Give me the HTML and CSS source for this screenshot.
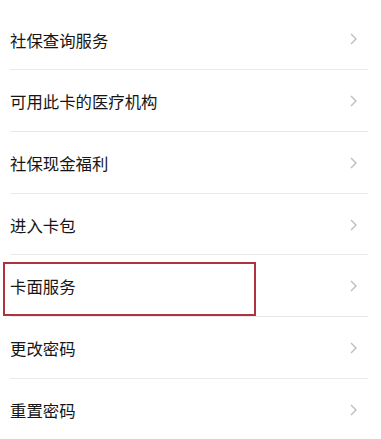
FILE: index.html
```html
<!DOCTYPE html>
<html lang="zh-CN">
<head>
<meta charset="utf-8">
<title>卡片服务</title>
<link rel="stylesheet" href="styles.css">
</head>
<body>
<ul class="menu">
  <li class="item"><span class="label">社保查询服务</span><svg class="chev" viewBox="0 0 7 12"><path d="M1 1 L6 6 L1 11"/></svg></li>
  <li class="item"><span class="label">可用此卡的医疗机构</span><svg class="chev" viewBox="0 0 7 12"><path d="M1 1 L6 6 L1 11"/></svg></li>
  <li class="item"><span class="label">社保现金福利</span><svg class="chev" viewBox="0 0 7 12"><path d="M1 1 L6 6 L1 11"/></svg></li>
  <li class="item"><span class="label">进入卡包</span><svg class="chev" viewBox="0 0 7 12"><path d="M1 1 L6 6 L1 11"/></svg></li>
  <li class="item item-marked"><span class="label">卡面服务</span><svg class="chev" viewBox="0 0 7 12"><path d="M1 1 L6 6 L1 11"/></svg><span class="highlight"></span></li>
  <li class="item"><span class="label">更改密码</span><svg class="chev" viewBox="0 0 7 12"><path d="M1 1 L6 6 L1 11"/></svg></li>
  <li class="item item-last"><span class="label">重置密码</span><svg class="chev" viewBox="0 0 7 12"><path d="M1 1 L6 6 L1 11"/></svg></li>
</ul>
</body>
</html>
```
FILE: styles.css
```css
html, body {
  margin: 0;
  padding: 0;
  background: #ffffff;
}
body {
  width: 381px;
  height: 439px;
  overflow: hidden;
  font-family: "Noto Sans CJK SC", "Noto Sans", sans-serif;
  color: #161616;
}
.menu {
  list-style: none;
  margin: 0 13px 0 10px;
  padding: 8.6px 0 0 0;
}
.item {
  position: relative;
  display: flex;
  align-items: center;
  justify-content: space-between;
  height: 60.7px;
  border-bottom: 1px solid #e9e9e9;
  padding-right: 11px;
}
.item-last {
  border-bottom: none;
}
.label {
  font-size: 16.4px;
  line-height: 1;
  padding-top: 2px;
}
.chev {
  width: 7px;
  height: 12px;
  fill: none;
  stroke: #bdbdbd;
  stroke-width: 1.4;
  margin-top: 1px;
}
.highlight {
  position: absolute;
  left: -7px;
  top: 6.3px;
  width: 249px;
  height: 50px;
  border: 2px solid #b1323f;
}
```
